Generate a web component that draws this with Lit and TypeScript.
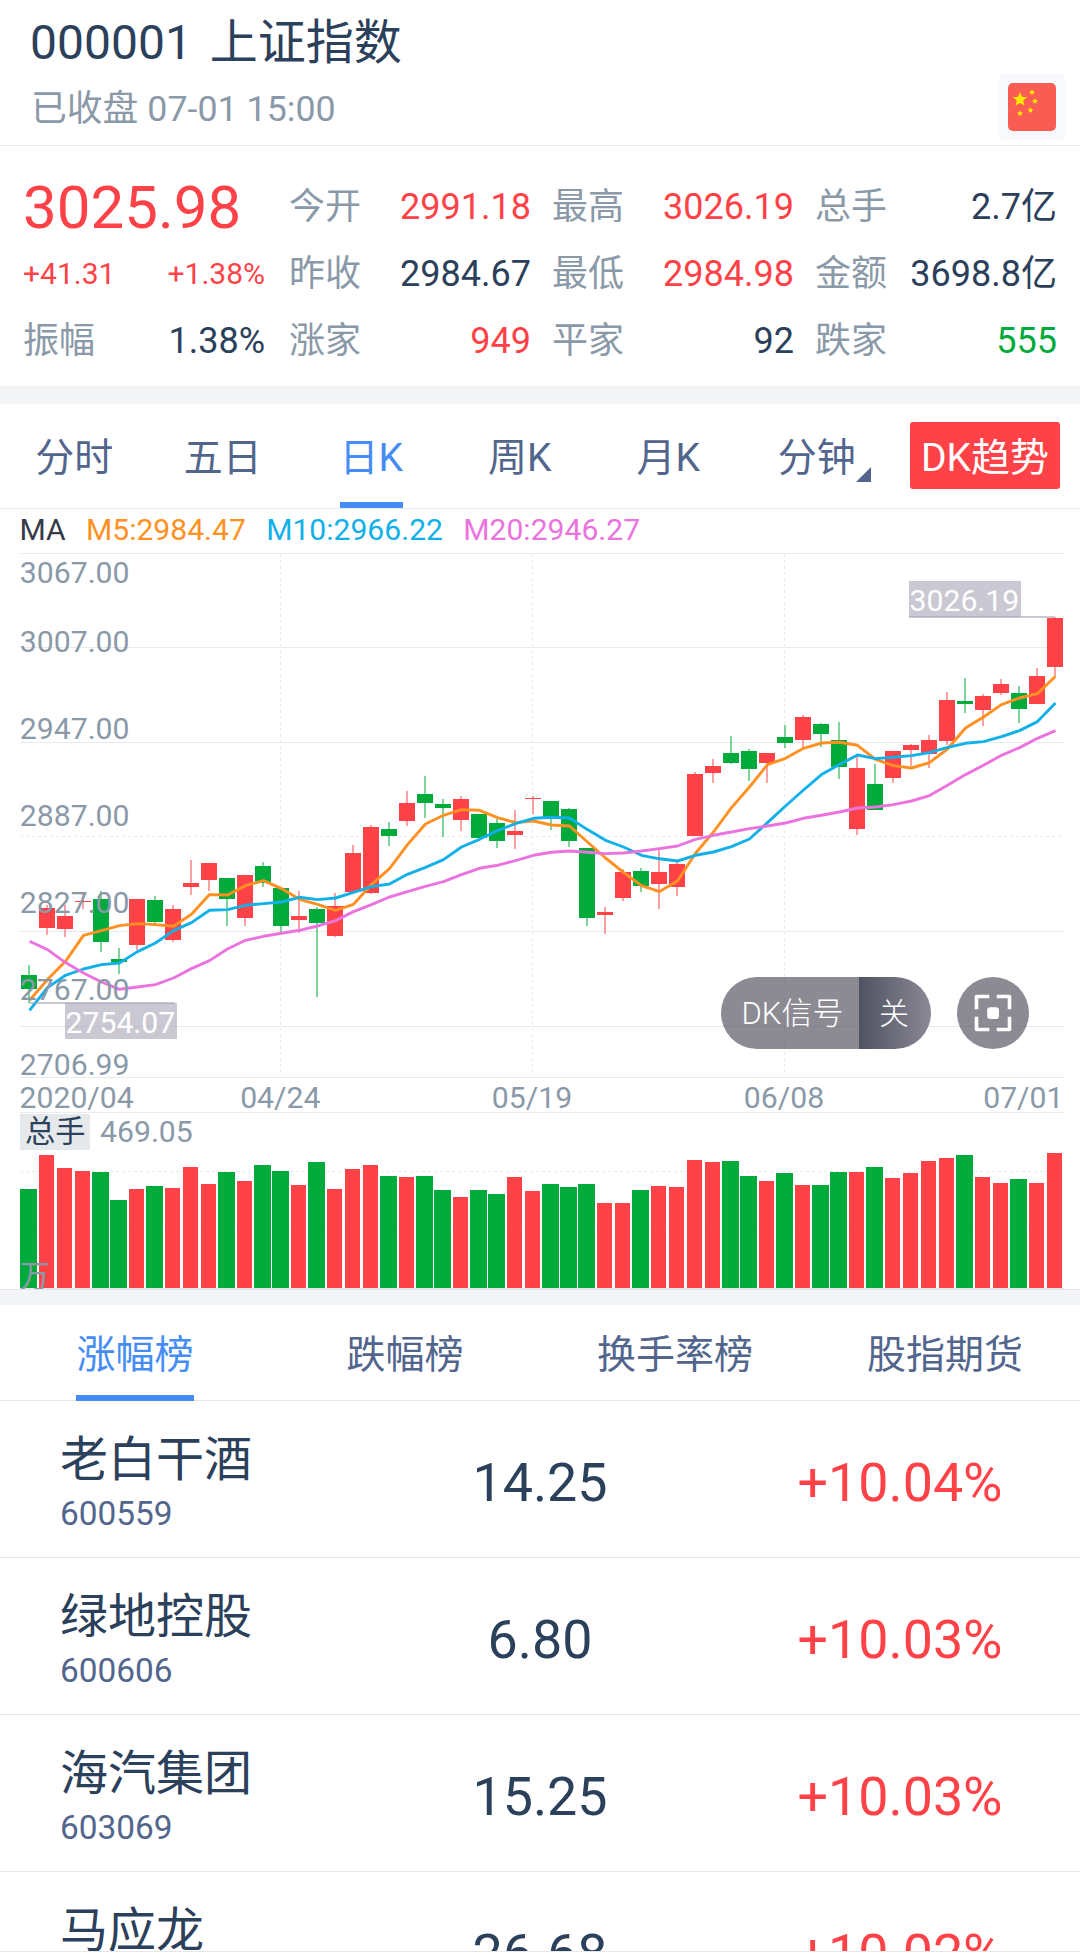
import { LitElement, html, svg, css } from "lit";
import { customElement, property } from "lit/decorators.js";
import { classMap } from "lit/directives/class-map.js";

type Candle = [up: 0 | 1, high: number, top: number, bottom: number, low: number];

// Vertical positions of each session's wick and body on the plot's scale.
const CANDLES: Candle[] = [
  [0, 965, 975, 989, 1003], [1, 905, 908, 928, 935], [1, 905, 916, 929, 937], [1, 894, 901, 902, 909],
  [0, 891, 899, 942, 952], [0, 948, 959, 962, 974], [1, 899, 899, 945, 950], [0, 896, 900, 922, 924],
  [1, 905, 909, 940, 942], [1, 860, 883, 887, 895], [1, 863, 863, 880, 891], [0, 878, 878, 899, 926],
  [1, 875, 875, 918, 926], [0, 862, 866, 883, 887], [0, 888, 888, 926, 932], [1, 891, 916, 920, 933],
  [0, 907, 909, 923, 997], [1, 893, 906, 936, 937], [1, 845, 853, 892, 892], [1, 825, 827, 893, 894],
  [0, 822, 829, 836, 846], [1, 791, 803, 821, 826], [0, 776, 794, 803, 818], [0, 799, 804, 808, 837],
  [1, 796, 799, 820, 831], [0, 814, 814, 838, 838], [0, 819, 823, 841, 848], [1, 810, 831, 835, 849],
  [1, 796, 798, 799, 814], [0, 801, 801, 817, 830], [0, 808, 809, 841, 847], [0, 848, 848, 918, 926],
  [1, 907, 912, 915, 934], [1, 869, 872, 898, 901], [0, 868, 871, 886, 892], [1, 849, 872, 884, 909],
  [1, 861, 864, 887, 896], [1, 772, 774, 836, 836], [1, 759, 766, 773, 783], [0, 736, 753, 763, 764],
  [0, 749, 751, 769, 781], [1, 753, 753, 763, 783], [0, 725, 737, 743, 748], [1, 715, 717, 740, 748],
  [0, 723, 724, 734, 747], [0, 722, 740, 767, 779], [1, 754, 768, 829, 835], [0, 764, 784, 810, 810],
  [1, 751, 751, 778, 783], [1, 744, 745, 750, 766], [1, 735, 740, 754, 768], [1, 692, 700, 741, 745],
  [0, 678, 701, 704, 713], [1, 694, 696, 710, 726], [1, 679, 684, 693, 695], [0, 686, 693, 709, 723],
  [1, 668, 676, 704, 704], [1, 617, 618, 667, 676],
];

const MA5 = [
  1000, 979.3, 961, 935, 930.3, 925.3, 923.3, 924.3, 926, 914, 894.3, 894.7, 885.3, 880.3, 888.3, 899, 904, 910, 904,
  884.3, 868.3, 844.3, 823.7, 815, 809.3, 810, 817.3, 822.3, 820.7, 824.7, 825.7, 841.7, 857.7, 872, 885.3, 891.3,
  880.7, 853, 831.7, 807.3, 786.7, 764.3, 758, 748, 742.7, 742, 745, 759, 765.3, 767.7, 762.3, 748.7, 727.7, 716.7,
  704.3, 697.7, 693.3, 676,
];
const MA10 = [
  1010, 987.3, 975, 968.7, 964.3, 962.7, 951.3, 942.7, 930.3, 922.3, 910, 909.3, 905, 903.3, 901.7, 897, 899.3, 897.7,
  892, 886.3, 883.7, 874, 867, 859.3, 846.7, 839, 830.3, 823.3, 818, 817, 817.7, 829.3, 840, 846.7, 855, 858.5, 860.7,
  855, 851.7, 846.3, 838.7, 822.3, 805.7, 789.7, 774.3, 764.3, 754.7, 758.3, 757, 755.3, 752.3, 747, 743, 741.3, 736.3,
  730.3, 721.3, 702.7,
];
const MA20 = [
  941, 949.3, 962.3, 972.7, 981.7, 989, 986.7, 984.3, 977.7, 968.3, 960.3, 948.7, 940, 936, 933, 930, 925.7, 920.3,
  911.3, 904.3, 896.7, 891.3, 886, 881.3, 874.3, 868, 865, 860.3, 855, 852, 850.7, 852, 853.3, 852.7, 850.7, 848.3,
  845.7, 839, 835, 831.7, 828.3, 825.7, 822.7, 818, 815, 811.7, 807.7, 806.7, 804.3, 800.7, 795.3, 785, 774.3, 765,
  755, 747.3, 738, 730.3,
];

const VOLUMES = [
  99, 133, 120, 117, 116, 88, 99, 102, 100, 121, 104, 116, 107, 123, 117, 103, 126, 99, 119, 123, 112, 111, 112, 98,
  91, 98, 94, 111, 97, 104, 101, 104, 85, 85, 98, 102, 101, 128, 126, 127, 112, 107, 115, 103, 103, 116, 116, 121,
  110, 115, 127, 130, 133, 111, 105, 109, 105, 135,
];

const PRICE_TICKS: [string, number][] = [
  ["3067.00", 583], ["3007.00", 652], ["2947.00", 739], ["2887.00", 826], ["2827.00", 913], ["2767.00", 1000],
  ["2706.99", 1075],
];
const DATE_TICKS: [string, number, string][] = [
  ["2020/04", 19.5, "start"], ["04/24", 280.3, "middle"], ["05/19", 532, "middle"], ["06/08", 784, "middle"],
  ["07/01", 1063.5, "end"],
];

const STEP = 18;
const centre = (i: number) => 29 + i * STEP;
const points = (ys: number[]) => ys.map((y, i) => `${centre(i) + 0.5},${y + 0.3}`).join(" ");

@customElement("kline-chart")
export class KlineChart extends LitElement {
  static styles = css`
    :host { display: block; position: relative; height: 736px; }
    svg { display: block; }
    .plot { width: 1080px; height: 736px; font: 30.2px Roboto, "Noto Sans CJK SC", sans-serif; }
    .grid { stroke: #e9eaef; stroke-width: 1; shape-rendering: crispEdges; }
    .dash { stroke-dasharray: 3 3; }
    .up { fill: #ff4248; }
    .down { fill: #00aa3b; }
    .wick { opacity: 0.5; }
    .solid { shape-rendering: crispEdges; }
    .ma { fill: none; stroke-width: 2.9; stroke-linejoin: round; }
    .ma5 { stroke: #ff9021; }
    .ma10 { stroke: #12b0e8; }
    .ma20 { stroke: #ea73de; }
    .tick { fill: #8a99a8; }
    .start { text-anchor: start; }
    .middle { text-anchor: middle; }
    .end { text-anchor: end; }
    .flag { fill: rgba(160, 158, 176, 0.56); }
    .flag-text { fill: #fff; }
    .chip { fill: #e6e9ec; }
    .chip-text { fill: #2b405a; }
    .pill {
      position: absolute; left: 721px; top: 424px; width: 210px; height: 72px; border-radius: 36px; overflow: hidden;
      display: flex; color: #fff; font: 300 30px/73px Roboto, "Noto Sans CJK SC", sans-serif;
    }
    .pill-name { flex: 0 0 138px; box-sizing: border-box; padding-left: 20.5px; background: rgba(63, 61, 77, 0.6); font-size: 31px; white-space: nowrap; }
    .pill-state { flex: 1; box-sizing: border-box; padding-left: 20px; background: linear-gradient(90deg, #505362, #8b8895); }
    .focus { position: absolute; left: 957px; top: 424px; width: 72px; height: 72px; }
    .focus-disc { fill: rgba(63, 61, 77, 0.6); }
    .focus-corner { fill: none; stroke: #fff; stroke-width: 3.6; stroke-linejoin: round; }
    .focus-dot { fill: #fff; }
  `;

  render() {
    return html`
      <svg class="plot" viewBox="0 553 1080 736">
        ${[553, 647, 742, 931, 1026, 1077, 1112, 1288].map(
          (y) => svg`<line class="grid" x1="20" x2="1064" y1=${y + 0.5} y2=${y + 0.5} />`,
        )}
        ${[836, 1171, 1229].map(
          (y) => svg`<line class="grid dash" x1="20" x2="1064" y1=${y + 0.5} y2=${y + 0.5} />`,
        )}
        ${[280.5, 532.5, 784.5].map((x) => svg`<line class="grid dash" x1=${x} x2=${x} y1="554" y2="1075" />`)}
        ${CANDLES.map(([up, high, top, bottom, low], i) => {
          const tone = up ? "up" : "down";
          const x = centre(i);
          return svg`
            <rect class="wick solid ${tone}" x=${x - 1} y=${high} width="2" height=${top - high} />
            <rect class="wick solid ${tone}" x=${x - 1} y=${bottom} width="2" height=${low - bottom} />
            <rect class="solid ${tone}" x=${x - 8} y=${top} width="16" height=${bottom - top} />`;
        })}
        <polyline class="ma ma5" points=${points(MA5)} />
        <polyline class="ma ma10" points=${points(MA10)} />
        <polyline class="ma ma20" points=${points(MA20)} />
        ${VOLUMES.map((h, i) => {
          const up = CANDLES[i][0];
          return svg`<rect class="solid ${up ? "up" : "down"}" x=${20 + i * STEP + up} y=${1288 - h}
            width=${up ? 15 : 17} height=${h} />`;
        })}
        ${PRICE_TICKS.map(([label, y]) => svg`<text class="tick" x="19.8" y=${y}>${label}</text>`)}
        ${DATE_TICKS.map(([label, x, anchor]) => svg`<text class="tick ${anchor}" x=${x} y="1108">${label}</text>`)}
        <rect class="flag" x="29" y="1002" width="146" height="2" />
        <rect class="flag" x="65" y="1003" width="112" height="36" />
        <text class="flag-text" x="65.5" y="1033">2754.07</text>
        <rect class="flag" x="909" y="616" width="146" height="2" />
        <rect class="flag" x="909" y="581" width="112" height="36" />
        <text class="flag-text" x="909.5" y="611">3026.19</text>
        <rect class="chip" x="20" y="1114" width="70" height="36" />
        <text class="chip-text" x="25" y="1142">总手</text>
        <text class="tick" x="100" y="1142">469.05</text>
        <text class="tick" x="19.5" y="1287">万</text>
      </svg>
      <div class="pill"><span class="pill-name">DK信号</span><span class="pill-state">关</span></div>
      <svg class="focus" viewBox="0 0 72 72">
        <circle class="focus-disc" cx="36" cy="36" r="36" />
        <path class="focus-corner" d="M32.3 19.5H19.5V32.3M39.7 19.5H52.5V32.3M52.5 39.7V52.5H39.7M32.3 52.5H19.5V39.7" />
        <rect class="focus-dot" x="30.2" y="30.2" width="11.8" height="11.8" rx="3" />
      </svg>
    `;
  }
}

type Stat = [label: string, value: string, tone: string];

const STATS: Stat[][] = [
  [["今开", "2991.18", "rise"], ["最高", "3026.19", "rise"], ["总手", "2.7亿", ""]],
  [["昨收", "2984.67", ""], ["最低", "2984.98", "rise"], ["金额", "3698.8亿", ""]],
  [["振幅", "1.38%", ""], ["涨家", "949", "rise"], ["平家", "92", ""], ["跌家", "555", "fall"]],
];

const PERIODS = ["分时", "五日", "日K", "周K", "月K", "分钟"];
const RANKINGS = ["涨幅榜", "跌幅榜", "换手率榜", "股指期货"];
const STOCKS = [
  ["老白干酒", "600559", "14.25", "+10.04%"],
  ["绿地控股", "600606", "6.80", "+10.03%"],
  ["海汽集团", "603069", "15.25", "+10.03%"],
  ["马应龙", "", "26.68", "+10.02%"],
];

const star = (cx: number, cy: number, r: number) =>
  Array.from({ length: 10 }, (_, k) => {
    const a = (k * Math.PI) / 5 - Math.PI / 2;
    const d = k % 2 ? r * 0.46 : r;
    return `${(cx + d * Math.cos(a)).toFixed(2)},${(cy + d * Math.sin(a)).toFixed(2)}`;
  }).join(" ");

@customElement("app-root")
export class AppRoot extends LitElement {
  @property() period = "日K";
  @property() ranking = "涨幅榜";

  static styles = css`
    :host {
      display: block; width: 1080px; height: 1958px; overflow: hidden; background: #fff; color: #2b405a;
      font-family: Roboto, "Noto Sans CJK SC", sans-serif;
    }
    .head { display: flex; justify-content: space-between; height: 145px; border-bottom: 1px solid #e6e7e9; }
    .title { padding: 11px 0 0 30px; }
    .name { display: flex; gap: 18px; font-size: 48px; line-height: 64px; }
    .status { margin-top: 10px; padding-left: 1px; font-size: 35.8px; line-height: 48px; color: #8a99a8; }
    .market { box-sizing: border-box; width: 66px; height: 66px; margin: 74px 15px 0 0; padding: 9px; border-radius: 5px; background: #f8f9fc; }
    .market svg { display: block; width: 48px; height: 48px; }
    .market-bg { fill: #f85c52; }
    .market-star { fill: #ffe600; }

    .quote {
      display: grid; grid-template-columns: 242px 242px 242px 242px; grid-auto-rows: 67px;
      padding: 28px 0 11px 23px; line-height: 67px; font-size: 36px; white-space: nowrap; column-gap: 22px;
    }
    .stat { display: flex; justify-content: space-between; }
    .stat:nth-child(4n + 2) { margin: 0 -2px 0 2px; }
    .stat:nth-child(4n + 3) { margin: 0 -1px 0 1px; }
    .label { color: #8a99a8; }
    .rise { color: #ff4248; }
    .fall { color: #00aa3b; }
    .last { font-size: 60px; color: #ff4248; }
    .change { font-size: 30px; line-height: 66px; color: #ff4248; }
    .gap { height: 18px; background: #f3f4f6; }
    .gap.thin { height: 15px; border-top: 1px solid #e3e5e9; }

    .periods { display: flex; align-items: flex-start; height: 104px; border-bottom: 1px solid #e6e7e9; font-size: 39px; color: #52668d; }
    .period { flex: 0 0 148.5px; display: flex; justify-content: center; height: 104px; }
    .period-name { position: relative; box-sizing: border-box; height: 104px; line-height: 108px; }
    .active { color: #468cf5; border-bottom: 6px solid #468cf5; }
    .corner { position: absolute; right: -15px; top: 63px; border-left: 15px solid transparent; border-bottom: 15px solid #52668d; }
    .trend { margin: 18px 0 0 19px; width: 150px; height: 67px; border-radius: 3px; background: #ff4248; color: #fff; line-height: 72px; text-align: center; }

    .legend { display: flex; gap: 20.3px; height: 44px; padding-left: 19.5px; font-size: 30.1px; line-height: 42px; }
    .ma { color: #353a48; }
    .m5 { color: #ff9021; }
    .m10 { color: #12b0e8; }
    .m20 { color: #ea73de; }

    .rankings { display: grid; grid-template-columns: repeat(4, 1fr); justify-items: center; height: 95px; border-bottom: 1px solid #e6e7e9; font-size: 39px; color: #52668d; }
    .ranking { box-sizing: border-box; height: 96px; line-height: 101px; }
    .list { height: 550px; overflow: hidden; border-bottom: 1px solid #e6e7e9; }
    .row { display: grid; grid-template-columns: repeat(3, 1fr); height: 156px; border-bottom: 1px solid #e6e7e9; }
    .stock { padding: 29px 0 0 60px; }
    .stock-name { font-size: 48px; line-height: 60px; }
    .stock-code { margin-top: 4px; font-size: 33.4px; line-height: 40px; color: #52668d; }
    .figure { font-size: 53.8px; line-height: 163px; text-align: center; }
  `;

  private stat([label, value, tone]: Stat) {
    return html`<div class="stat"><span class="label">${label}</span><span class=${tone}>${value}</span></div>`;
  }

  render() {
    return html`
      <header class="head">
        <div class="title">
          <div class="name"><span>000001</span><span>上证指数</span></div>
          <div class="status">已收盘 07-01 15:00</div>
        </div>
        <div class="market">
          <svg viewBox="0 0 48 48">
            <rect class="market-bg" width="48" height="48" rx="5" />
            <polygon class="market-star" points=${star(12, 16.5, 7.6)} />
            ${[[24, 9.3], [27, 18.2], [22.5, 27.2], [12, 30.5]].map(
              ([x, y]) => svg`<polygon class="market-star" points=${star(x, y, 3.2)} />`,
            )}
          </svg>
        </div>
      </header>

      <section class="quote">
        <span class="last">3025.98</span>
        ${STATS[0].map((s) => this.stat(s))}
        <div class="stat change"><span>+41.31</span><span>+1.38%</span></div>
        ${STATS[1].map((s) => this.stat(s))}
        ${STATS[2].map((s) => this.stat(s))}
      </section>

      <div class="gap"></div>

      <nav class="periods">
        ${PERIODS.map(
          (p) => html`<div class="period">
            <span class=${classMap({ "period-name": true, active: p === this.period })}
              >${p}${p === "分钟" ? html`<i class="corner"></i>` : ""}</span>
          </div>`,
        )}
        <div class="trend">DK趋势</div>
      </nav>

      <div class="legend">
        <span class="ma">MA</span><span class="m5">M5:2984.47</span><span class="m10">M10:2966.22</span
        ><span class="m20">M20:2946.27</span>
      </div>
      <kline-chart></kline-chart>

      <div class="gap thin"></div>

      <nav class="rankings">
        ${RANKINGS.map((r) => html`<span class=${classMap({ ranking: true, active: r === this.ranking })}>${r}</span>`)}
      </nav>
      <section class="list">
        ${STOCKS.map(
          ([name, code, price, change]) => html`<div class="row">
            <div class="stock"><div class="stock-name">${name}</div><div class="stock-code">${code}</div></div>
            <div class="figure">${price}</div>
            <div class="figure rise">${change}</div>
          </div>`,
        )}
      </section>
    `;
  }
}
